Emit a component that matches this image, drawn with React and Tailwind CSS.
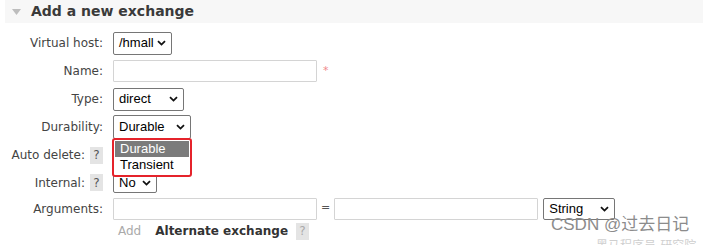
import React from 'react';

const sans = { fontFamily: '"DejaVu Sans", Verdana, sans-serif' };

function Chevron() {
  return (
    <svg width="9" height="6" viewBox="0 0 9 6" className="shrink-0">
      <path d="M1 1.2 L4.5 4.6 L8 1.2" fill="none" stroke="#111" strokeWidth="1.8" />
    </svg>
  );
}

function FakeSelect({ value, width, height = 23 }) {
  return (
    <div
      className="flex items-center justify-between bg-white border border-[#767676] rounded-[2px] pl-[5px] pr-[5px] text-[13px] text-black font-['Liberation_Sans',Arial,sans-serif]"
      style={{ width, height }}
    >
      <span>{value}</span>
      <Chevron />
    </div>
  );
}

function TextInput({ width = 204 }) {
  return <div className="h-[22px] bg-white border border-[#d4d4d4] rounded-[1px]" style={{ width }} />;
}

function Help({ faint }) {
  return (
    <span
      className={`inline-flex items-center justify-center w-[13px] h-[17px] bg-[#e4e4e4] text-[12px] ${faint ? 'text-[#aaa]' : 'text-[#555]'}`}
    >
      ?
    </span>
  );
}

function Row({ label, help, h = 28, children }) {
  return (
    <div className="flex items-center" style={{ height: h }}>
      <div className="w-[103px] shrink-0 flex justify-end items-center gap-[5px] text-[12px] text-[#444]">
        <span>{label}</span>
        {help && <Help />}
      </div>
      <div className="ml-[10px] flex items-center">{children}</div>
    </div>
  );
}

export default function App() {
  return (
    <div className="relative w-[703px] h-[245px] bg-white overflow-hidden" style={sans}>
      {/* section header */}
      <div className="ml-[5px] h-[23px] bg-[#f7f7f7] flex items-center">
        <svg width="9" height="6" viewBox="0 0 9 6" className="ml-[7px] mt-[1px]">
          <polygon points="0,0 9,0 4.5,6" fill="#bdbdbd" />
        </svg>
        <span className="ml-[10px] text-[14px] font-bold text-[#3a3a3a]">Add a new exchange</span>
      </div>

      <div className="mt-[6px]">
        <Row label="Virtual host:">
          <FakeSelect value="/hmall" width={59} />
        </Row>
        <Row label="Name:">
          <TextInput />
          <span className="ml-[6px] text-[11px] text-[#f08a8a]">*</span>
        </Row>
        <Row label="Type:">
          <FakeSelect value="direct" width={71} />
        </Row>
        <Row label="Durability:">
          <FakeSelect value="Durable" width={78} height={24} />
        </Row>
        <Row label="Auto delete:" help>
          <FakeSelect value="No" width={44} height={20} />
        </Row>
        <Row label="Internal:" help h={27}>
          <FakeSelect value="No" width={44} height={20} />
        </Row>
        <Row label="Arguments:" h={25}>
          <TextInput />
          <span className="mx-[4px] text-[11px] text-[#555]">=</span>
          <TextInput />
          <div className="ml-[5px]">
            <FakeSelect value="String" width={72} height={22} />
          </div>
        </Row>
        <div className="flex items-center h-[20px] pl-[118px] text-[12px]">
          <span className="text-[#aaa]">Add</span>
          <span className="ml-[14px] font-bold text-[#333]">Alternate exchange</span>
          <span className="ml-[8px]">
            <Help faint />
          </span>
        </div>
      </div>

      {/* open dropdown list of Durability */}
      <div className="absolute left-[112px] top-[138px] w-[80px] h-[39px] border-2 border-[#e5232b] rounded-[3px] bg-white p-[1px] font-['Liberation_Sans',Arial,sans-serif] text-[13px] leading-[16px]">
        <div className="bg-[#7b7b7b] text-white pl-[5px] h-[16px]">Durable</div>
        <div className="text-black pl-[5px] h-[16px]">Transient</div>
      </div>

      {/* watermark */}
      <div className="absolute left-[551px] top-[214px] text-[17px] leading-[22px] text-[#8c8c8c] whitespace-nowrap font-['Liberation_Sans','Noto_Sans_CJK_SC',sans-serif]">
        CSDN @过去日记
      </div>
      <div className="absolute left-[596px] top-[238px] text-[12px] leading-[14px] text-[#cfcfcf] whitespace-nowrap font-['Noto_Sans_CJK_SC',sans-serif]">
        黑马程序员-研究院
      </div>
    </div>
  );
}
